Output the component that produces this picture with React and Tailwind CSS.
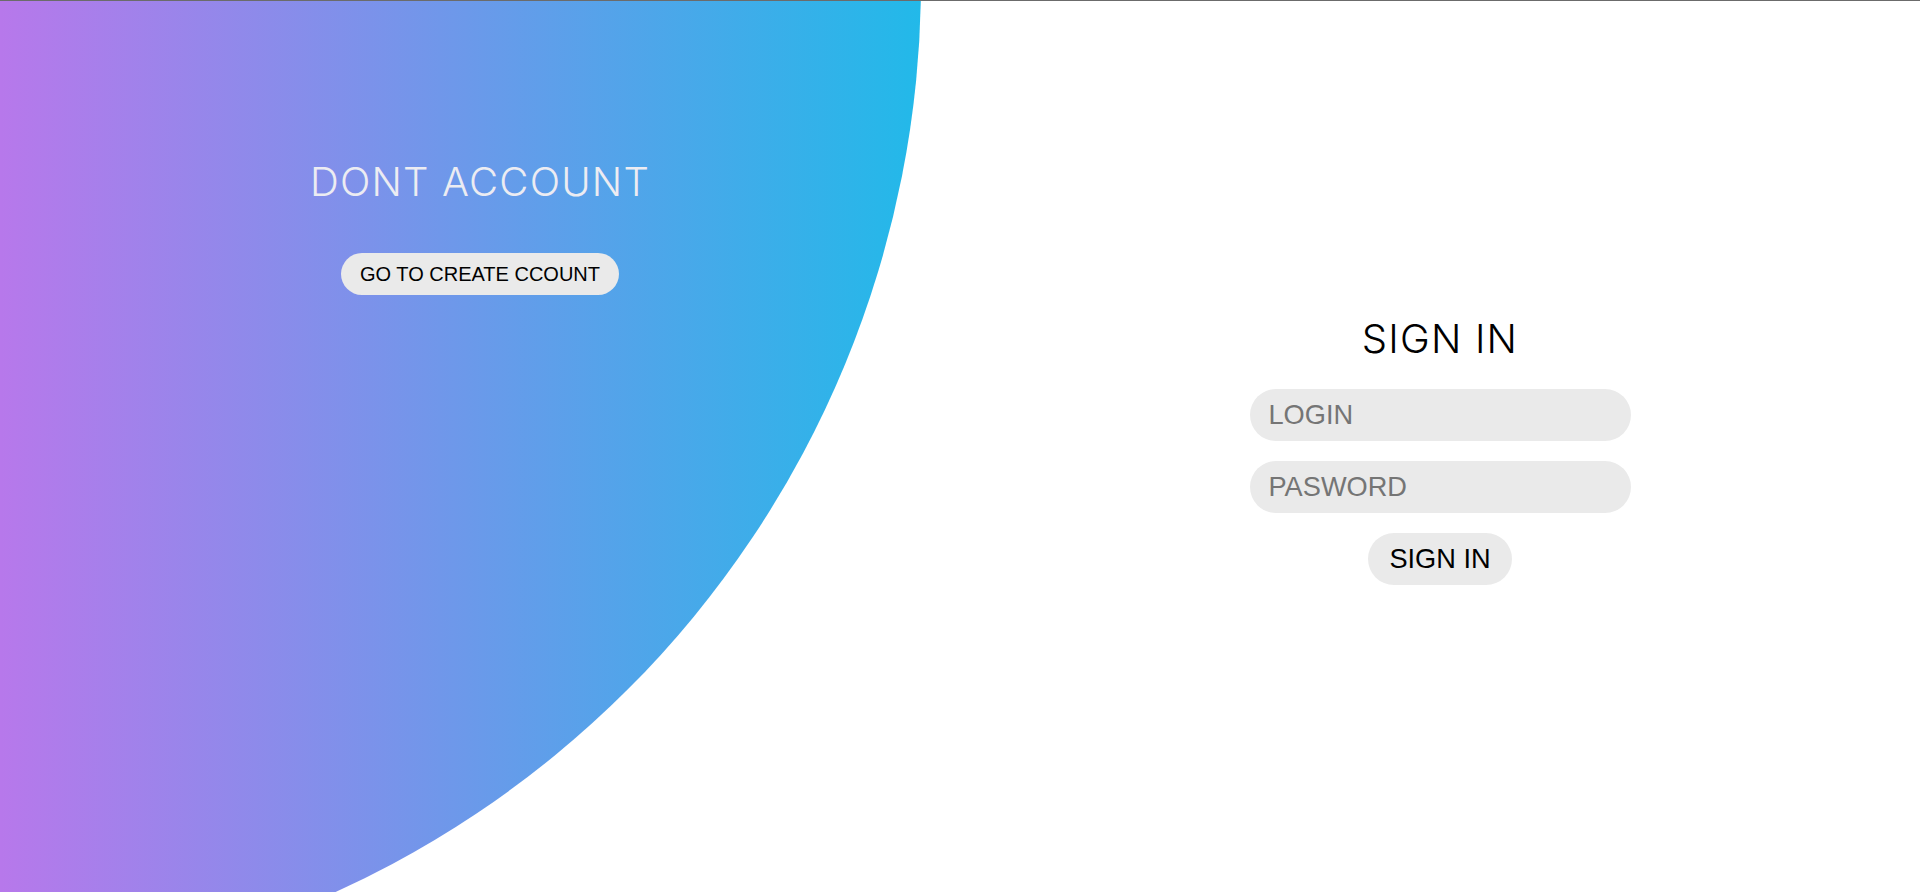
import React from "react";

export default function App() {
  return (
    <div className="relative w-full h-[892px] overflow-hidden bg-white border-t border-[#6b6b6b]">
      <div className="absolute left-[-1079px] top-[-1019px] w-[2000px] h-[2000px] rounded-full bg-[linear-gradient(to_right,#b778eb_54%,#22b9e9_100%)]" />
      <div className="relative grid grid-cols-2 h-full">
        <div className="flex flex-col items-center pt-[161px]">
          <h2 className="font-['Inter',sans-serif] font-light text-[40px] leading-none text-[#ececf2] tracking-[0.03em]">
            DONT ACCOUNT
          </h2>
          <button className="mt-[51px] h-[42px] px-[19px] rounded-full bg-[#eaeaea] font-['Liberation_Sans',Arial,sans-serif] text-[20px] leading-none text-black">
            GO TO CREATE CCOUNT
          </button>
        </div>
        <div className="flex flex-col items-center pt-[318px]">
          <h2 className="font-['Inter',sans-serif] font-light text-[40px] leading-none text-black tracking-[0.03em]">
            SIGN IN
          </h2>
          <form className="mt-[30px] flex flex-col items-center gap-5" onSubmit={(e) => e.preventDefault()}>
            <input
              type="text"
              placeholder="LOGIN"
              className="w-[381px] h-[52px] rounded-full bg-[#eaeaea] pl-[19px] pr-4 font-['Liberation_Sans',Arial,sans-serif] text-[27.2px] text-black placeholder:text-[#757575] outline-none"
            />
            <input
              type="password"
              placeholder="PASWORD"
              className="w-[381px] h-[52px] rounded-full bg-[#eaeaea] pl-[19px] pr-4 font-['Liberation_Sans',Arial,sans-serif] text-[27.2px] text-black placeholder:text-[#757575] outline-none"
            />
            <button
              type="submit"
              className="h-[52px] px-[21px] rounded-full bg-[#eaeaea] font-['Liberation_Sans',Arial,sans-serif] text-[27.2px] leading-none text-black"
            >
              SIGN IN
            </button>
          </form>
        </div>
      </div>
    </div>
  );
}
